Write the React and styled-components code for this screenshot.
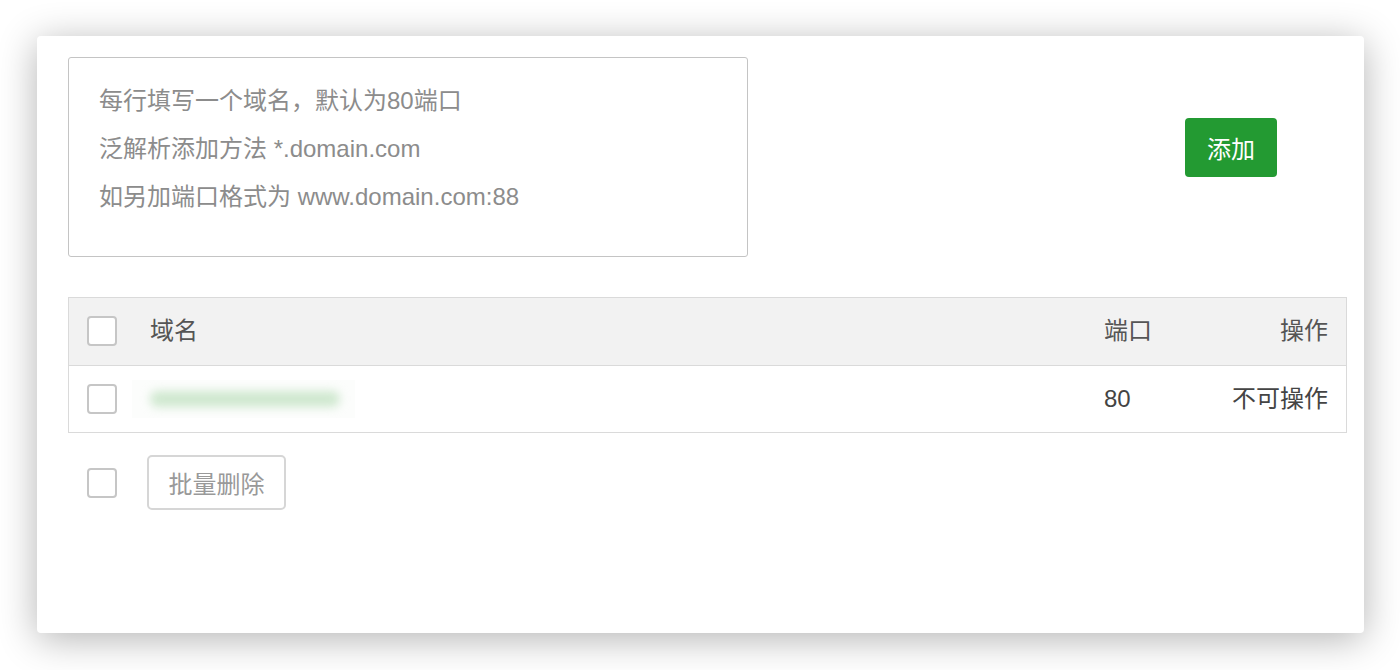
import React from 'react';
import styled, { createGlobalStyle } from 'styled-components';

const GlobalStyle = createGlobalStyle`
  html, body {
    margin: 0;
    padding: 0;
    background: #fff;
  }
  body {
    font-family: "Liberation Sans", "Noto Sans CJK SC", sans-serif;
  }
`;

const Page = styled.div`
  padding: 36px 36px 0 37px;
  width: 1400px;
  height: 670px;
  box-sizing: border-box;
`;

const Panel = styled.div`
  width: 1327px;
  height: 597px;
  box-sizing: border-box;
  background: #fff;
  border-radius: 4px;
  box-shadow: 0 6px 38px rgba(0, 0, 0, 0.3);
  padding: 21px 17px 0 31px;
`;

const TopRow = styled.div`
  display: flex;
  justify-content: space-between;
  align-items: flex-start;
`;

const DomainInput = styled.div`
  width: 680px;
  height: 200px;
  box-sizing: border-box;
  border: 1px solid #c4c4c4;
  border-radius: 3px;
  padding: 19px 30px;
  color: #8c8c8c;
  font-size: 24px;
  line-height: 48px;
`;

const PrimaryButton = styled.button`
  margin: 61px 70px 0 0;
  width: 92px;
  height: 59px;
  border: none;
  border-radius: 4px;
  background: #239a32;
  color: #fff;
  font-family: inherit;
  font-size: 24px;
  cursor: pointer;
`;

const Table = styled.div`
  margin-top: 40px;
  border: 1px solid #dadada;
`;

const Row = styled.div`
  display: grid;
  grid-template-columns: 82px 1fr 64px 178px;
  align-items: center;
  height: ${(p) => (p.head ? '66px' : '66px')};
  padding-bottom: ${(p) => (p.head ? '1px' : '0')};
  background: ${(p) => (p.head ? '#f2f2f2' : '#fff')};
  border-top: ${(p) => (p.head ? 'none' : '1px solid #dadada')};
  color: ${(p) => (p.head ? '#555' : '#444')};
  font-size: 24px;
  line-height: 30px;
`;

const CheckCell = styled.div`
  padding-left: 18px;
  display: flex;
  align-items: center;
`;

const Check = styled.span`
  display: inline-block;
  width: 30px;
  height: 30px;
  box-sizing: border-box;
  border: 2px solid #c6c6c6;
  border-radius: 4px;
  background: #fff;
`;

const Cell = styled.div`
  text-align: ${(p) => (p.right ? 'right' : 'left')};
  padding-right: ${(p) => (p.right ? '18px' : '0')};
  margin-left: ${(p) => (p.first ? '-1px' : '0')};
`;

const BlurBox = styled.div`
  margin-left: -18px;
  width: 223px;
  height: 38px;
  display: flex;
  align-items: center;
  padding-left: 18px;
  box-sizing: border-box;
  background: #fcfdfc;
`;

const Blurred = styled.span`
  display: inline-block;
  width: 190px;
  height: 16px;
  border-radius: 8px;
  background: #cfe8cf;
  filter: blur(5px);
`;

const Footer = styled.div`
  display: flex;
  align-items: center;
  gap: 30px;
  padding: 22px 0 0 19px;
`;

const GhostButton = styled.button`
  width: 139px;
  height: 55px;
  background: #fff;
  border: 2px solid #d6d6d6;
  border-radius: 5px;
  color: #999;
  font-family: inherit;
  font-size: 24px;
  cursor: pointer;
`;

export default function App() {
  return (
    <>
      <GlobalStyle />
      <Page>
        <Panel>
          <TopRow>
            <DomainInput>
              <div>每行填写一个域名，默认为80端口</div>
              <div>泛解析添加方法 *.domain.com</div>
              <div>如另加端口格式为 www.domain.com:88</div>
            </DomainInput>
            <PrimaryButton>添加</PrimaryButton>
          </TopRow>

          <Table>
            <Row head>
              <CheckCell><Check /></CheckCell>
              <Cell first>域名</Cell>
              <Cell>端口</Cell>
              <Cell right>操作</Cell>
            </Row>
            <Row>
              <CheckCell><Check /></CheckCell>
              <Cell first>
                <BlurBox><Blurred /></BlurBox>
              </Cell>
              <Cell>80</Cell>
              <Cell right>不可操作</Cell>
            </Row>
          </Table>

          <Footer>
            <Check />
            <GhostButton>批量删除</GhostButton>
          </Footer>
        </Panel>
      </Page>
    </>
  );
}
